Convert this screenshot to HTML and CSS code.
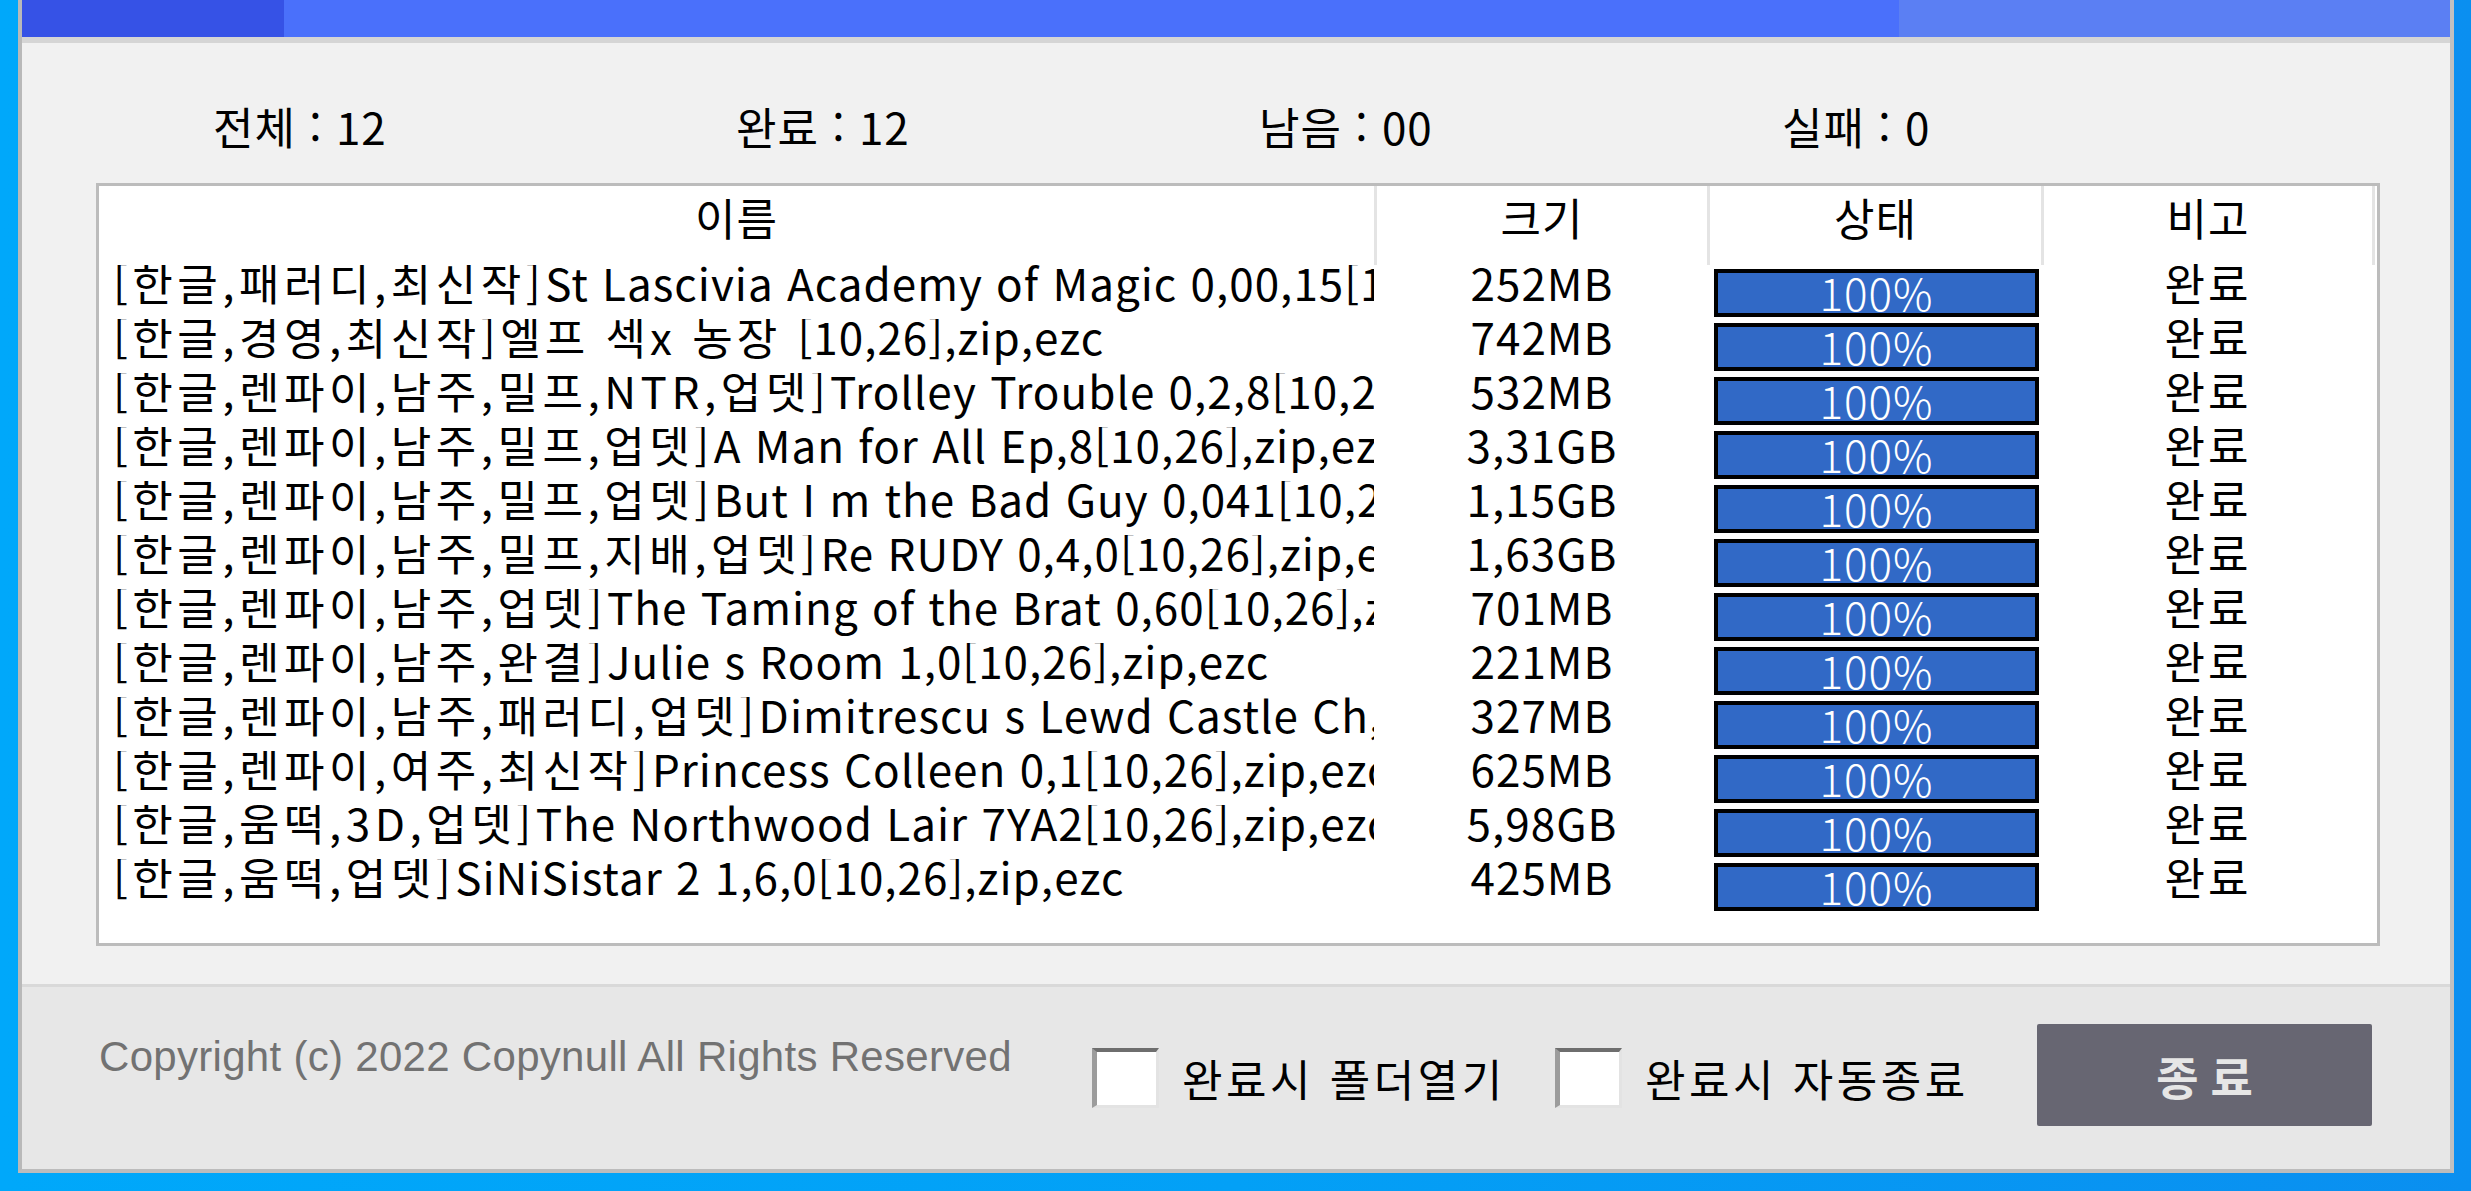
FILE: index.html
```html
<!DOCTYPE html>
<html lang="ko">
<head>
<meta charset="utf-8">
<title>다운로드</title>
<link rel="stylesheet" href="styles.css">
</head>
<body>
<div class="window">
  <div class="titlebar">
    <div class="seg seg-a"></div>
    <div class="seg seg-b"></div>
    <div class="seg seg-c"></div>
  </div>
  <div class="content">
    <div class="stats">
      <div class="stat">전체 : 12</div>
      <div class="stat">완료 : 12</div>
      <div class="stat">남음 : 00</div>
      <div class="stat">실패 : 0</div>
    </div>
    <div class="table">
      <div class="thead">
        <div class="th">이름</div>
        <div class="th">크기</div>
        <div class="th">상태</div>
        <div class="th">비고</div>
      </div>
      <div class="row"><div class="name"><span class="tag">[한글,패러디,최신작]</span>St Lascivia Academy of Magic 0,00,15[10,26],zip,ezc</div><div class="size">252MB</div><div class="status"><div class="bar">100%</div></div><div class="note">완료</div></div>
      <div class="row"><div class="name"><span class="tag">[한글,경영,최신작]</span><span class="ko">엘프 섹x 농장 </span>[10,26],zip,ezc</div><div class="size">742MB</div><div class="status"><div class="bar">100%</div></div><div class="note">완료</div></div>
      <div class="row"><div class="name"><span class="tag">[한글,렌파이,남주,밀프,NTR,업뎃]</span>Trolley Trouble 0,2,8[10,26],zip,ezc</div><div class="size">532MB</div><div class="status"><div class="bar">100%</div></div><div class="note">완료</div></div>
      <div class="row"><div class="name"><span class="tag">[한글,렌파이,남주,밀프,업뎃]</span>A Man for All Ep,8[10,26],zip,ezc</div><div class="size">3,31GB</div><div class="status"><div class="bar">100%</div></div><div class="note">완료</div></div>
      <div class="row"><div class="name"><span class="tag">[한글,렌파이,남주,밀프,업뎃]</span>But I m the Bad Guy 0,041[10,26],zip,ezc</div><div class="size">1,15GB</div><div class="status"><div class="bar">100%</div></div><div class="note">완료</div></div>
      <div class="row"><div class="name"><span class="tag">[한글,렌파이,남주,밀프,지배,업뎃]</span>Re RUDY 0,4,0[10,26],zip,ezc</div><div class="size">1,63GB</div><div class="status"><div class="bar">100%</div></div><div class="note">완료</div></div>
      <div class="row"><div class="name"><span class="tag">[한글,렌파이,남주,업뎃]</span>The Taming of the Brat 0,60[10,26],zip,ezc</div><div class="size">701MB</div><div class="status"><div class="bar">100%</div></div><div class="note">완료</div></div>
      <div class="row"><div class="name"><span class="tag">[한글,렌파이,남주,완결]</span>Julie s Room 1,0[10,26],zip,ezc</div><div class="size">221MB</div><div class="status"><div class="bar">100%</div></div><div class="note">완료</div></div>
      <div class="row"><div class="name"><span class="tag">[한글,렌파이,남주,패러디,업뎃]</span>Dimitrescu s Lewd Castle Ch,1[10,26],zip,ezc</div><div class="size">327MB</div><div class="status"><div class="bar">100%</div></div><div class="note">완료</div></div>
      <div class="row"><div class="name"><span class="tag">[한글,렌파이,여주,최신작]</span>Princess Colleen 0,1[10,26],zip,ezc</div><div class="size">625MB</div><div class="status"><div class="bar">100%</div></div><div class="note">완료</div></div>
      <div class="row"><div class="name"><span class="tag">[한글,움떡,3D,업뎃]</span>The Northwood Lair 7YA2[10,26],zip,ezc</div><div class="size">5,98GB</div><div class="status"><div class="bar">100%</div></div><div class="note">완료</div></div>
      <div class="row"><div class="name"><span class="tag">[한글,움떡,업뎃]</span>SiNiSistar 2 1,6,0[10,26],zip,ezc</div><div class="size">425MB</div><div class="status"><div class="bar">100%</div></div><div class="note">완료</div></div>
    </div>
  </div>
  <div class="footer">
    <div class="copyright">Copyright (c) 2022 Copynull All Rights Reserved</div>
    <div class="check"></div>
    <div class="label label-1">완료시 폴더열기</div>
    <div class="check"></div>
    <div class="label label-2">완료시 자동종료</div>
    <div class="button">종료</div>
  </div>
</div>
</body>
</html>
```

FILE: styles.css
```css
html, body {
  margin: 0;
  padding: 0;
  height: 1191px;
  overflow: hidden;
}

body {
  background: linear-gradient(90deg, #00a8fa 0%, #03a0f6 50%, #0a8ff0 100%);
  font-family: "Noto Sans CJK KR", "Noto Sans", sans-serif;
  color: #000;
}

.window {
  margin: 0 17px 0 18px;
  height: 1173px;
  box-sizing: border-box;
  border-left: 4px solid #b9b9b9;
  border-right: 4px solid #c0c0c0;
  border-bottom: 4px solid #bcbcbc;
  background: #f1f1f1;
  display: flex;
  flex-direction: column;
}

.titlebar {
  height: 37px;
  display: flex;
  border-bottom: 6px solid #d5d5d5;
}

.seg-a { width: 262px; background: #3652e6; }
.seg-b { width: 1615px; background: #4a70fb; }
.seg-c { flex: 1; background: #5b7ff3; }

.content {
  height: 941px;
  box-sizing: border-box;
  padding-top: 63px;
}

.stats {
  display: grid;
  grid-template-columns: repeat(4, 523px);
  padding-left: 191px;
  height: 40px;
  line-height: 40px;
  font-size: 44px;
  letter-spacing: 1px;
  margin-bottom: 37px;
}

.table {
  margin-left: 74px;
  width: 2284px;
  height: 763px;
  box-sizing: border-box;
  border: 3px solid #bcbcbc;
  background: #fff;
  font-size: 44px;
  letter-spacing: 1px;
}

.thead,
.row {
  display: grid;
  grid-template-columns: 1278px 333px 334px 331px;
}

.thead {
  height: 79px;
}

.th {
  border-right: 3px solid #e4e4e4;
  text-align: center;
  line-height: 40px;
  padding-top: 11px;
}

.row {
  height: 54px;
  line-height: 34px;
}

.name {
  padding-left: 14px;
  white-space: nowrap;
  overflow: hidden;
  border-right: 3px solid transparent;
}

.tag {
  letter-spacing: 4.5px;
}

.ko {
  letter-spacing: 4px;
}

.size,
.note {
  text-align: center;
  border-right: 3px solid transparent;
}

.note {
  letter-spacing: 3px;
}

.status {
  padding: 4px 0 0 4px;
  border-right: 3px solid transparent;
}

.bar {
  width: 325px;
  height: 48px;
  box-sizing: border-box;
  border: 4px solid #000;
  background: #3169c6;
  color: #fff;
  text-align: center;
  line-height: 38px;
  font-weight: 300;
}

.footer {
  flex: 1;
  border-top: 3px solid #d9d9d9;
  background: #e7e7e7;
  display: flex;
  align-items: center;
  padding-left: 77px;
  font-size: 44px;
  letter-spacing: 1px;
}

.copyright {
  align-self: flex-start;
  width: 993px;
  margin-top: 50px;
  font-family: "Liberation Sans", Arial, sans-serif;
  font-size: 42px;
  letter-spacing: 0.3px;
  line-height: 40px;
  color: #727272;
  white-space: nowrap;
}

.check {
  width: 67px;
  height: 60px;
  box-sizing: border-box;
  background: #fff;
  border-top: 4px solid #6e6e6e;
  border-left: 5px solid #9c9c9c;
  border-right: 3px solid #e3e3e3;
  border-bottom: 3px solid #e3e3e3;
  margin-right: 23px;
}

.label {
  line-height: 40px;
  white-space: nowrap;
  letter-spacing: 3.5px;
}

.label-1 { width: 373px; }
.label-2 { width: 392px; }

.button {
  width: 335px;
  height: 102px;
  margin-top: -6px;
  background: #676672;
  color: #e6e6e6;
  border-radius: 2px;
  display: flex;
  align-items: center;
  justify-content: center;
  font-size: 46px;
  font-weight: 700;
  letter-spacing: 12px;
  padding-left: 12px;
  box-sizing: border-box;
}
```
